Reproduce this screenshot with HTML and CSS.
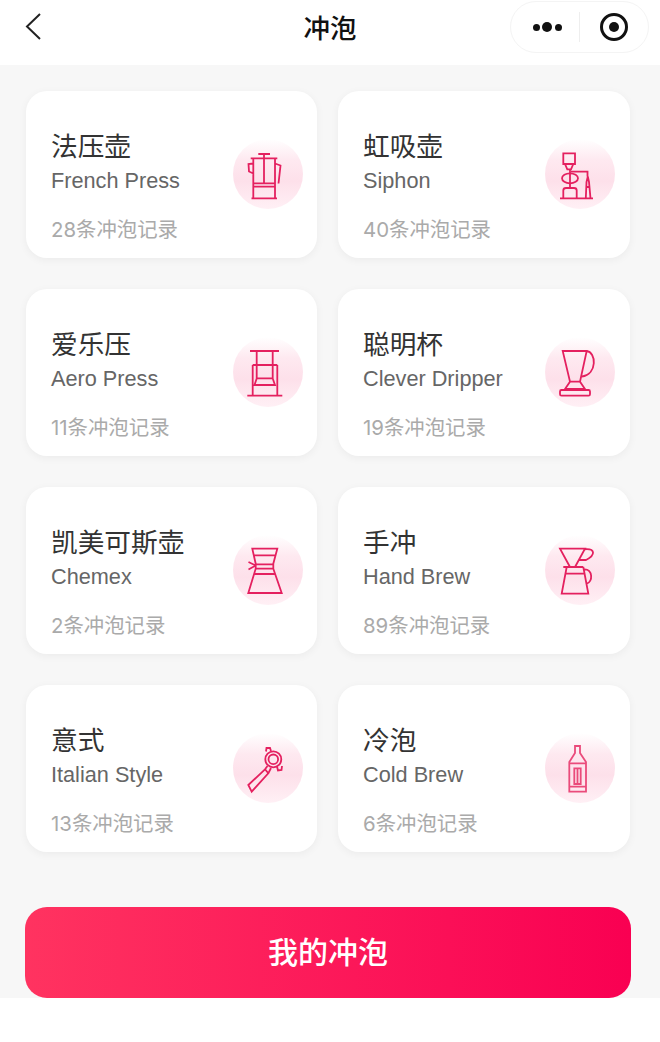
FILE: index.html
```html
<!DOCTYPE html>
<html lang="zh">
<head>
<meta charset="utf-8">
<title>冲泡</title>
<link rel="stylesheet" href="styles.css">
</head>
<body>
<header class="nav">
  <div class="nav-left">
    <svg class="back" viewBox="0 0 20 30" width="20" height="30"><path d="M16 2 3 14.5 16 27"/></svg>
  </div>
  <h1 class="nav-title">冲泡</h1>
  <div class="nav-right">
    <div class="capsule">
      <div class="capsule-cell capsule-more">
        <span class="dot"></span><span class="dot dot-big"></span><span class="dot"></span>
      </div>
      <div class="capsule-sep"></div>
      <div class="capsule-cell">
        <span class="target"><span class="target-core"></span></span>
      </div>
    </div>
  </div>
</header>
<main class="content">
  <section class="grid">
    <article class="card">
      <div class="card-text">
        <div class="name">法压壶</div>
        <div class="en">French Press</div>
        <div class="meta">28条冲泡记录</div>
      </div>
      <div class="badge">
        <svg class="ico" viewBox="0 0 70 70"><path d="M25.3 15H37M31 15V44.3M17.7 19.3H44.3M20.3 19.3V59.3H42V19.3M18.5 59.3H44M20.3 44.3H42M20.3 47.7H42M20.3 24.5 15.5 25 16 32.5 20.3 34.5M42 24.5 47.5 26.5 45.5 44.5"/></svg>
      </div>
    </article>
    <article class="card">
      <div class="card-text">
        <div class="name">虹吸壶</div>
        <div class="en">Siphon</div>
        <div class="meta">40条冲泡记录</div>
      </div>
      <div class="badge">
        <svg class="ico" viewBox="0 0 70 70"><path d="M18.3 14.3H30V25H18.3ZM20 25H28.3L26 30.3H22.3ZM25 30.3V48M18.3 59.3V51.5Q18.3 49 21 49H29Q31.7 49 31.7 51.5V59.3M15 59.3H48M26 32.7H42.5V37.5M40.8 59.3 41.5 43 42.8 37.5 44 43 45.5 59.3M41 48H45"/><ellipse cx="25" cy="39.3" rx="8" ry="5"/></svg>
      </div>
    </article>
    <article class="card">
      <div class="card-text">
        <div class="name">爱乐压</div>
        <div class="en">Aero Press</div>
        <div class="meta">11条冲泡记录</div>
      </div>
      <div class="badge">
        <svg class="ico" viewBox="0 0 70 70"><path d="M17 14H46M23.7 14V41.3H39.7V14M19.7 28H44.3M19.7 28V58.7M44.3 28V58.7M23.7 41.5 21.5 48H42L39.7 41.5M14.3 58.7H49.3"/></svg>
      </div>
    </article>
    <article class="card">
      <div class="card-text">
        <div class="name">聪明杯</div>
        <div class="en">Clever Dripper</div>
        <div class="meta">19条冲泡记录</div>
      </div>
      <div class="badge">
        <svg class="ico" viewBox="0 0 70 70"><path d="M17.7 14H41.7L35 44.7H25ZM41.7 14C51 15 53 37 36.7 39.7M25 44.7H35L40 52H20ZM16.5 53H43.5Q45 53 45 54.5V57.2Q45 58.7 43.5 58.7H16.5Q15 58.7 15 57.2V54.5Q15 53 16.5 53Z"/></svg>
      </div>
    </article>
    <article class="card">
      <div class="card-text">
        <div class="name">凯美可斯壶</div>
        <div class="en">Chemex</div>
        <div class="meta">2条冲泡记录</div>
      </div>
      <div class="badge">
        <svg class="ico" viewBox="0 0 70 70"><path d="M19.3 13.7H44.3L40.3 28.7V33.7L48.7 58H15.3L22.7 33.7V28.7ZM20.7 20.3H43M22.7 29.3H40.3M22.7 33.7H40.3M20.8 39H42.2M15.5 27 22.7 30.5M15.5 34.5 22.7 30.5"/></svg>
      </div>
    </article>
    <article class="card">
      <div class="card-text">
        <div class="name">手冲</div>
        <div class="en">Hand Brew</div>
        <div class="meta">89条冲泡记录</div>
      </div>
      <div class="badge">
        <svg class="ico" viewBox="0 0 70 70"><path d="M15 13.7H40L30 32H25ZM40 14.3C50 13.5 51 20 41 25H34.5M18.3 32H38.3M21.7 32 16.7 58.7H43.3L38.3 32M20.5 38.7H39.5M39.3 34.3C48 34 48 47 41.7 48.7"/></svg>
      </div>
    </article>
    <article class="card">
      <div class="card-text">
        <div class="name">意式</div>
        <div class="en">Italian Style</div>
        <div class="meta">13条冲泡记录</div>
      </div>
      <div class="badge">
        <svg class="ico" viewBox="0 0 70 70"><circle cx="40.3" cy="26.3" r="4.8"/><circle cx="40.3" cy="26.3" r="8"/><path d="M32 36.3 15.3 52 18.7 58.7 35.3 40.3ZM32 36.3 34.5 33M35.3 40.3 38 35M33 18.5 33.5 15 37 15 38 18M44 33.5 45 37.5 48.5 37 49 33"/></svg>
      </div>
    </article>
    <article class="card">
      <div class="card-text">
        <div class="name">冷泡</div>
        <div class="en">Cold Brew</div>
        <div class="meta">6条冲泡记录</div>
      </div>
      <div class="badge">
        <svg class="ico ico-light" viewBox="0 0 70 70"><path d="M30 13H35V20L41 29V58.7H24.3V29L30 20ZM24.3 30.3H41M29.3 35.3H35.7V51H29.3ZM32.5 35.3V51M24.3 53.7H41"/></svg>
      </div>
    </article>
  </section>
  <button class="cta" type="button"><span class="cta-label">我的冲泡</span></button>
</main>
</body>
</html>
```
FILE: styles.css
```css
* { box-sizing: border-box; }
html, body { margin: 0; padding: 0; background: #fff; }
body {
  width: 660px;
  height: 1042px;
  overflow: hidden;
  font-family: "Liberation Sans", "Noto Sans CJK SC", sans-serif;
  color: #333;
}
.nav {
  height: 65px;
  display: grid;
  grid-template-columns: 1fr auto 1fr;
  align-items: start;
  background: #fff;
}
.nav-left { padding: 12px 0 0 24px; }
.back { display: block; fill: none; stroke: #222; stroke-width: 2; }
.nav-title {
  margin: 0;
  font: 500 26.5px/54px "Noto Sans CJK SC", sans-serif;
  color: #111;
}
.nav-right { display: flex; justify-content: flex-end; padding: 1px 11px 0 0; }
.capsule {
  width: 139px;
  height: 52px;
  display: flex;
  align-items: center;
  border: 1px solid #f4f4f4;
  border-radius: 26px;
  background: #fff;
}
.capsule-cell { width: 68px; flex: none; display: flex; align-items: center; justify-content: center; gap: 2.5px; }
.capsule-more { padding-left: 4px; }
.capsule-sep { width: 1px; height: 30px; background: #eee; }
.dot { width: 7px; height: 7px; border-radius: 50%; background: #111; }
.dot-big { width: 10px; height: 10px; }
.target {
  width: 28px;
  height: 28px;
  border: 3px solid #111;
  border-radius: 50%;
  display: flex;
  align-items: center;
  justify-content: center;
}
.target-core { width: 10px; height: 10px; border-radius: 50%; background: #111; }
.content {
  height: 933px;
  background: #f7f7f7;
  padding: 26px 29px 0 25px;
  display: flex;
  flex-direction: column;
}
.grid {
  display: grid;
  grid-template-columns: 291px 292px;
  grid-auto-rows: 167px;
  column-gap: 21px;
  row-gap: 31px;
  padding-left: 1px;
}
.card {
  background: #fff;
  border-radius: 21px;
  box-shadow: 0 2px 9px rgba(0, 0, 0, 0.05);
  padding: 37px 14px 0 25px;
  display: flex;
  justify-content: space-between;
  align-items: flex-start;
}
.card:nth-child(even) { padding-right: 15px; }
.name {
  font: 400 26.7px/34px "Noto Sans CJK SC", sans-serif;
  color: #333;
  white-space: nowrap;
}
.en {
  margin-top: 2px;
  font-size: 21.7px;
  line-height: 34px;
  color: #666;
  white-space: nowrap;
}
.meta {
  margin-top: 17px;
  font-family: Inter, "Noto Sans CJK SC", sans-serif;
  font-size: 20.4px;
  line-height: 30px;
  color: #aaa;
  white-space: nowrap;
}
.badge {
  width: 70px;
  height: 70px;
  margin-top: 11px;
  flex: none;
  border-radius: 50%;
  background: linear-gradient(#fff 0%, #fee9f0 30%, #fde0ea 60%, #fff0f5 100%);
}
.ico {
  display: block;
  width: 70px;
  height: 70px;
  fill: none;
  stroke: #e4205f;
  stroke-width: 1.8;
}
.ico-light { stroke: #ea4b7b; }
.cta {
  margin-top: 55px;
  width: 606px;
  height: 91px;
  border: 0;
  border-radius: 22px;
  background: linear-gradient(90deg, #ff3360 0%, #fb0f57 70%, #f90052 100%);
  color: #fff;
  font: 500 30px/40px "Noto Sans CJK SC", sans-serif;
  padding: 0 0 6px;
}
.cta-label { display: block; }
```
